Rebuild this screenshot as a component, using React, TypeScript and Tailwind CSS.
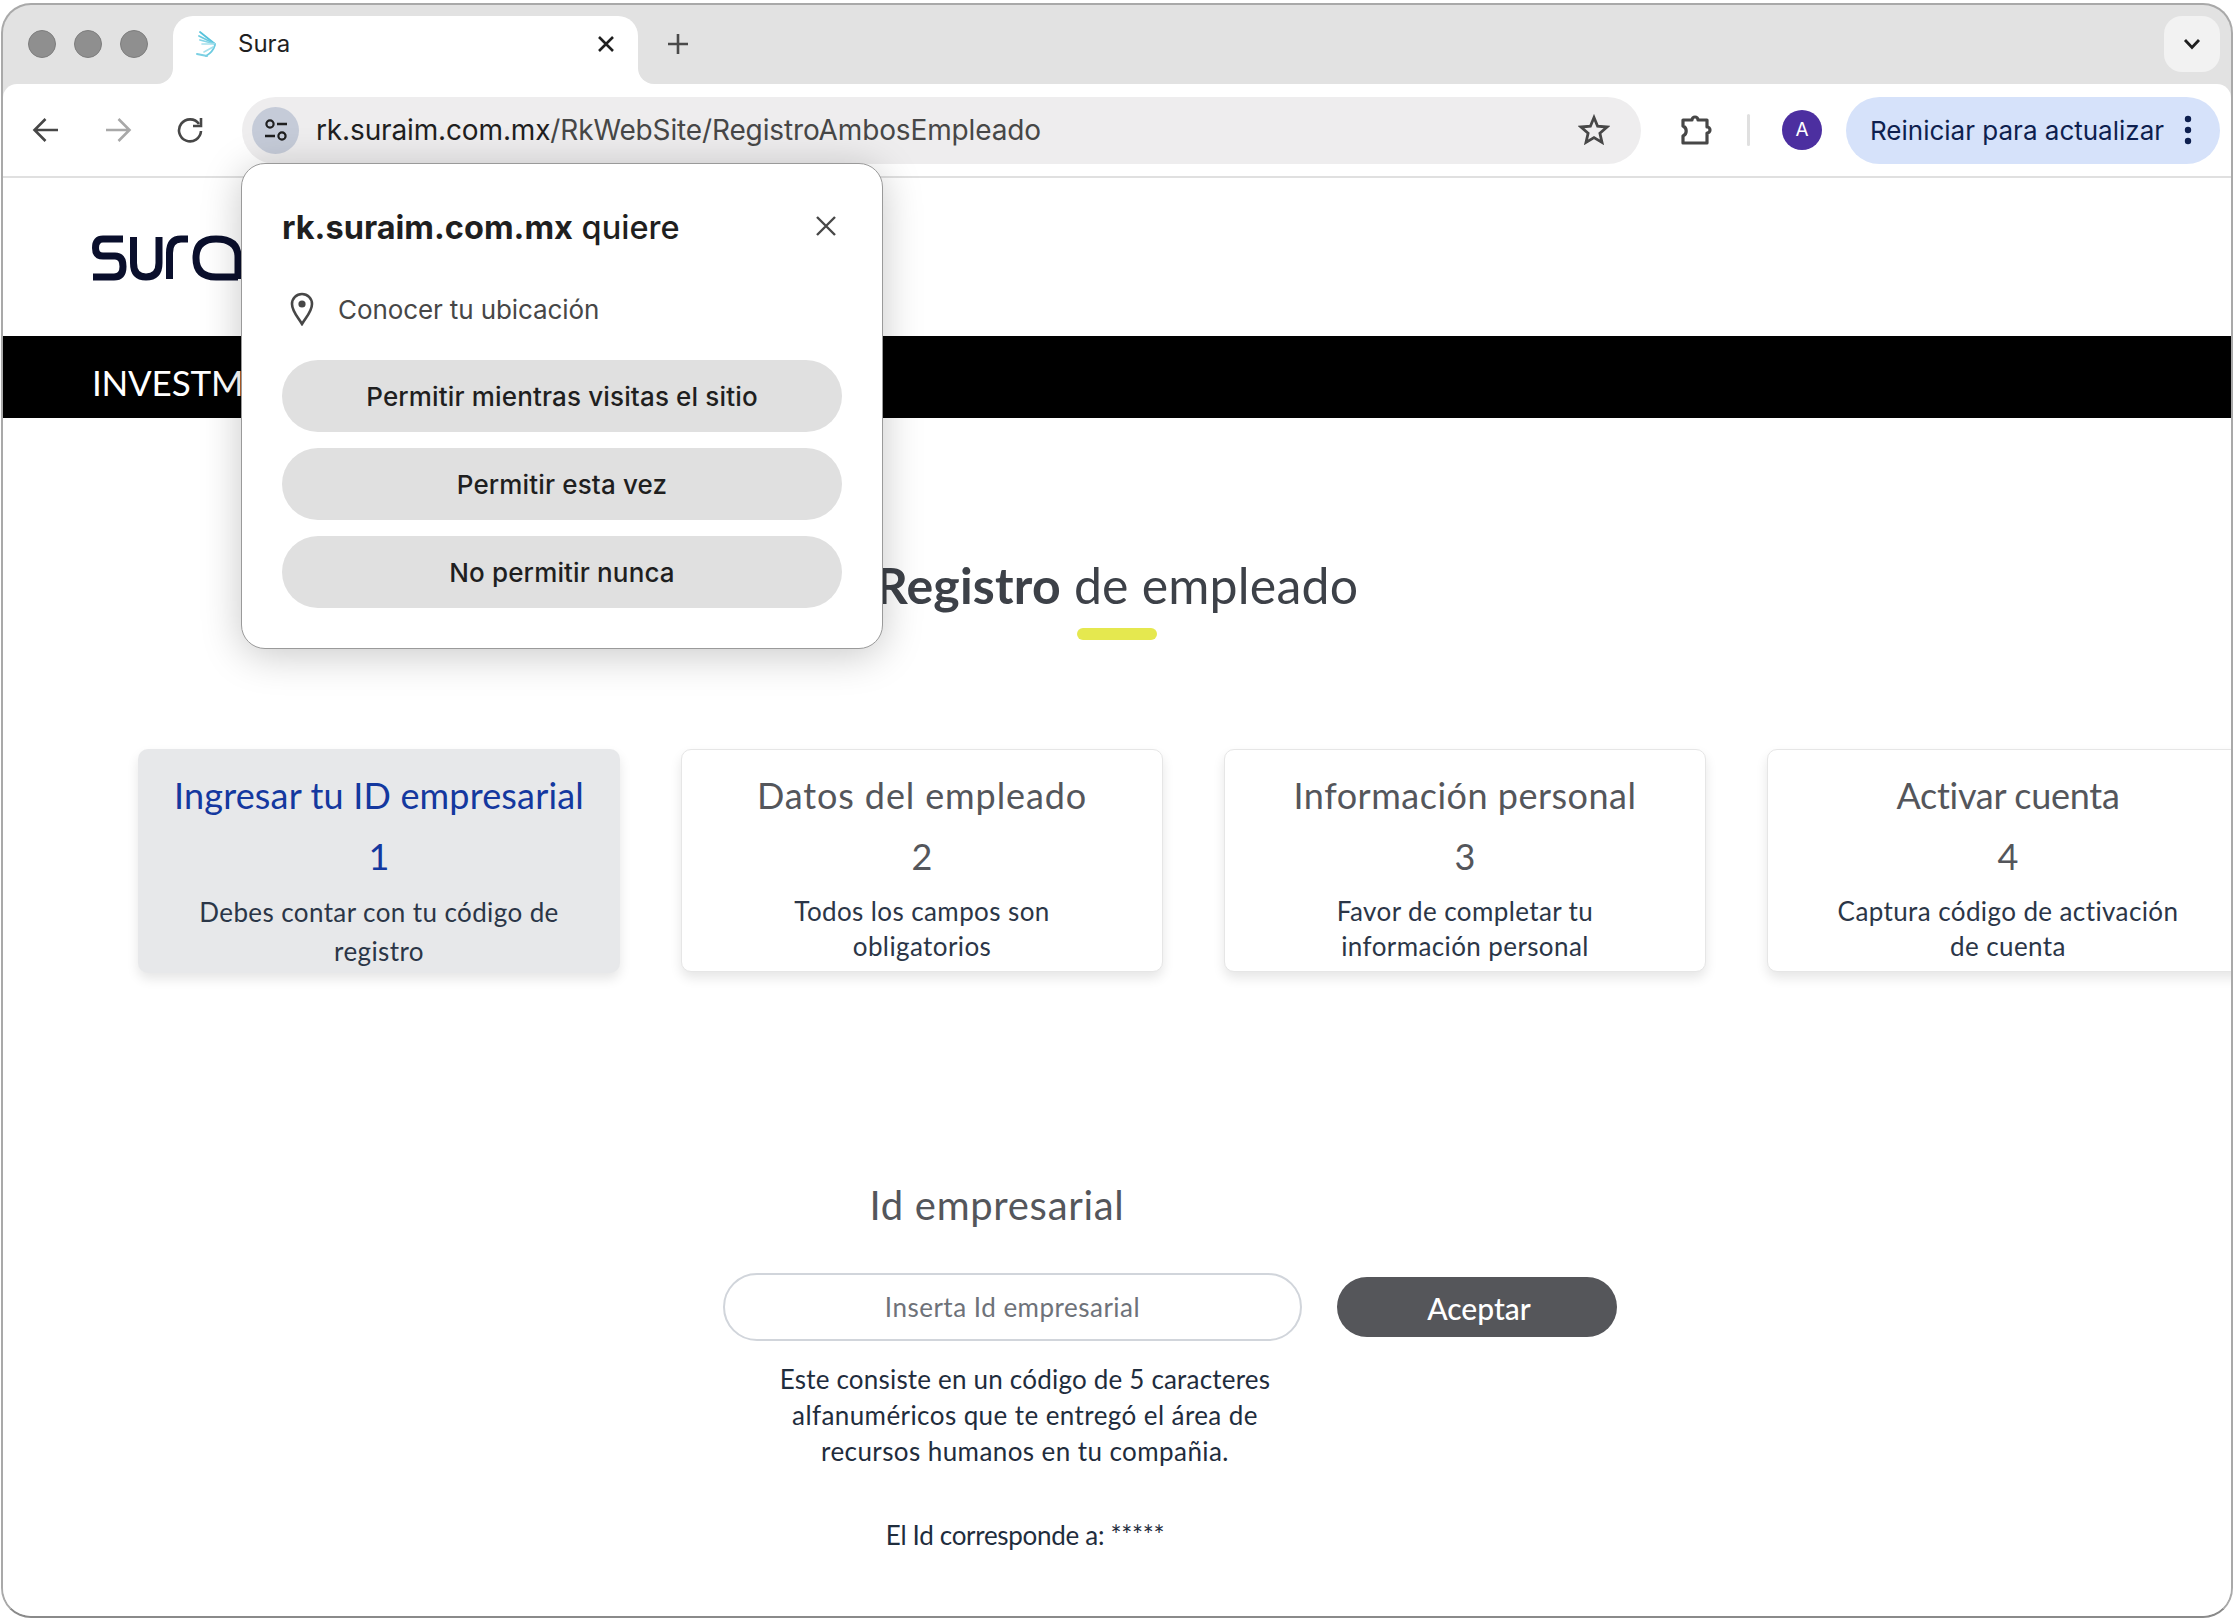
import React from "react";

const ui = "font-['Inter','Liberation_Sans',sans-serif]";
const web = "font-['Lato','Open_Sans',sans-serif]";

function Light() {
  return <span className="block w-[28px] h-[28px] rounded-full bg-[#8f8f8f] border border-[#7d7d7d]" />;
}

function Favicon() {
  return (
    <svg width="22" height="28" viewBox="0 0 22 28" fill="none" strokeLinecap="round">
      <path d="M20 14 L5 2" stroke="#58c3dc" strokeWidth="1.8" />
      <path d="M20 14 L4 6" stroke="#6ccbe0" strokeWidth="1.8" />
      <path d="M20 14 L5 10" stroke="#86d5e6" strokeWidth="1.8" />
      <path d="M20 14 L7 14" stroke="#a5e0ec" strokeWidth="1.6" />
      <path d="M20 15 Q18 22 11 26" stroke="#6ccbe0" strokeWidth="1.8" />
      <path d="M18 17 L9 22" stroke="#a5e0ec" strokeWidth="1.6" />
      <path d="M2 24 L12 26" stroke="#7bd0e3" strokeWidth="2" />
    </svg>
  );
}

function Toolbtn({ children }: { children: React.ReactNode }) {
  return <span className="flex items-center justify-center w-[36px] h-[36px] shrink-0">{children}</span>;
}

function Arrow({ color, flip }: { color: string; flip?: boolean }) {
  return (
    <svg width="28" height="28" viewBox="0 0 28 28" fill="none" className={flip ? "rotate-180" : ""}>
      <path d="M26 14 H3 M13.5 3 L2.5 14 L13.5 25" stroke={color} strokeWidth="2.6" />
    </svg>
  );
}

function Card({ title, num, desc, active, track }: { title: string; num: string; desc: string[]; active?: boolean; track: string }) {
  return (
    <div
      className={
        active
          ? "w-[482px] h-[224px] shrink-0 rounded-[10px] bg-[#e7e8ea] shadow-[0_6px_12px_rgba(0,0,0,0.10)] flex flex-col items-center pt-[24px] text-center"
          : "w-[482px] h-[223px] shrink-0 rounded-[10px] bg-white border border-[#e6e6e6] shadow-[0_6px_12px_rgba(0,0,0,0.10)] flex flex-col items-center pt-[23px] text-center"
      }
    >
      <div className={`text-[36px] leading-[44px] ${track} ${active ? "text-[#14389f]" : "text-[#54565b]"}`}>{title}</div>
      <div className={`mt-[17px] text-[36px] leading-[44px] ${active ? "text-[#14389f]" : "text-[#54565b]"}`}>{num}</div>
      <div className={`text-[26px] tracking-[0.4px] text-[#2b3647] ${active ? "mt-[15px] leading-[39px]" : "mt-[16px] leading-[35px]"}`}>
        {desc.map((d) => (
          <div key={d}>{d}</div>
        ))}
      </div>
    </div>
  );
}

function PermButton({ children }: { children: React.ReactNode }) {
  return (
    <button className="w-[560px] h-[72px] rounded-full bg-[#e0e0e0] text-[26px] font-medium text-[#1f1f1f] tracking-[0.15px] flex items-center justify-center">
      {children}
    </button>
  );
}

export default function App() {
  return (
    <div className={`w-[2236px] h-[1618px] bg-white overflow-hidden pt-[3px] pl-[1px] ${ui}`}>
      <div className="relative w-[2232px] h-[1615px] rounded-[30px] border-2 border-[#a9a9a9] border-b-[#8a8a8a] bg-[#e2e2e2] overflow-hidden flex flex-col">
        {/* tab strip */}
        <div className="flex items-start h-[79px] shrink-0">
          <div className="flex gap-[18px] ml-[25px] mt-[25px]">
            <Light />
            <Light />
            <Light />
          </div>
          <div className="relative ml-[25px] mt-[11px] w-[465px] h-[68px] bg-white rounded-t-[20px] flex items-center pl-[22px] pr-[23px] pb-[12px] z-10">
            <span className="absolute -left-[16px] bottom-0 w-[16px] h-[16px] bg-white">
              <span className="block w-full h-full bg-[#e2e2e2] rounded-br-[16px]" />
            </span>
            <span className="absolute -right-[16px] bottom-0 w-[16px] h-[16px] bg-white">
              <span className="block w-full h-full bg-[#e2e2e2] rounded-bl-[16px]" />
            </span>
            <Favicon />
            <span className="ml-[21px] text-[24px] text-[#1f1f1f]">Sura</span>
            <svg width="18" height="18" viewBox="0 0 18 18" className="ml-auto">
              <path d="M2 2 L16 16 M16 2 L2 16" stroke="#1f1f1f" strokeWidth="2.6" />
            </svg>
          </div>
          <svg width="24" height="24" viewBox="0 0 24 24" className="ml-[28px] mt-[27px]">
            <path d="M12 2 V22 M2 12 H22" stroke="#4a4a4a" strokeWidth="2.6" />
          </svg>
          <div className="ml-auto mr-[11px] mt-[11px] w-[56px] h-[56px] rounded-[18px] bg-[#f2f2f2] flex items-center justify-center">
            <svg width="18" height="12" viewBox="0 0 18 12" fill="none">
              <path d="M2 2 L9 9.5 L16 2" stroke="#1f1f1f" strokeWidth="2.8" />
            </svg>
          </div>
        </div>

        {/* toolbar */}
        <div className="relative flex items-center h-[94px] shrink-0 bg-white rounded-t-[14px] border-b-2 border-[#e0e0e0]">
          <span className="ml-[25px]">
            <Toolbtn>
              <Arrow color="#474747" />
            </Toolbtn>
          </span>
          <span className="ml-[36px]">
            <Toolbtn>
              <Arrow color="#a8a8a8" flip />
            </Toolbtn>
          </span>
          <span className="ml-[36px]">
            <Toolbtn>
              <svg width="28" height="28" viewBox="0 0 28 28" fill="none">
                <path d="M23 8 A11 11 0 1 0 25 15" stroke="#474747" strokeWidth="2.6" />
                <path d="M25 2 V10 H17" stroke="#474747" strokeWidth="2.6" />
              </svg>
            </Toolbtn>
          </span>
          <div className="ml-[34px] w-[1399px] h-[67px] rounded-full bg-[#eeedee] flex items-center">
            <span className="ml-[10px] w-[47px] h-[47px] rounded-full bg-[#c5cbd8] flex items-center justify-center">
              <svg width="26" height="26" viewBox="0 0 26 26" fill="none">
                <circle cx="7" cy="7" r="3.6" stroke="#1f1f1f" strokeWidth="2.2" />
                <path d="M14 7 H24 M2 19 H12" stroke="#1f1f1f" strokeWidth="2.4" />
                <circle cx="19" cy="19" r="3.6" stroke="#1f1f1f" strokeWidth="2.2" />
              </svg>
            </span>
            <span className="ml-[17px] text-[28px] tracking-[-0.14px] text-[#474747]">
              <span className="text-[#1f1f1f]">rk.suraim.com.mx</span>/RkWebSite/RegistroAmbosEmpleado
            </span>
            <svg width="32" height="32" viewBox="0 0 32 32" fill="none" className="ml-auto mr-[31px]">
              <path
                d="M16 3.5 L19.6 12.2 L29 13 L21.9 19.2 L24 28.4 L16 23.6 L8 28.4 L10.1 19.2 L3 13 L12.4 12.2 Z"
                stroke="#474747"
                strokeWidth="2.8"
                strokeLinejoin="miter"
              />
            </svg>
          </div>
          <span className="ml-[36px]">
            <Toolbtn>
              <svg width="36" height="36" viewBox="0 0 36 36" fill="none">
                <path
                  d="M6 8 H15 A3 3 0 0 1 21 8 H30 V15 A3 3 0 0 1 30 21 V31 H6 V24 A5.5 5.5 0 0 0 6 14 Z"
                  stroke="#474747"
                  strokeWidth="3.2"
                  strokeLinejoin="round"
                />
              </svg>
            </Toolbtn>
          </span>
          <span className="ml-[34px] w-[3px] h-[32px] rounded-full bg-[#e0e0e0]" />
          <span className="ml-[32px] w-[40px] h-[40px] rounded-full bg-[#4c2fa0] flex items-center justify-center text-white text-[19px]">A</span>
          <div className="ml-[24px] w-[374px] h-[67px] rounded-full bg-[#d6e2fa] flex items-center pl-[24px] pr-[28px] text-[#0e1f4f]">
            <span className="text-[26px] mt-[1px]">Reiniciar para actualizar</span>
            <svg width="8" height="30" viewBox="0 0 8 30" className="ml-auto">
              <circle cx="4" cy="4" r="3.2" fill="#0e1f4f" />
              <circle cx="4" cy="15" r="3.2" fill="#0e1f4f" />
              <circle cx="4" cy="26" r="3.2" fill="#0e1f4f" />
            </svg>
          </div>
        </div>

        {/* page */}
        <div className={`flex-1 bg-white overflow-hidden ${web}`}>
          <div className="h-[158px] pl-[89px] pt-[57px]">
            <svg width="150" height="46" viewBox="0 0 150 46" fill="none" stroke="#0a0f2c" strokeWidth="7">
              <path d="M31 4 H11 Q3.5 4 3.5 13 Q3.5 21 11 21 H23 Q31 21 31 31.5 Q31 42 22 42 H1" />
              <path d="M41.5 2 V28 Q41.5 42 54 42 Q67 42 67 28 V2" />
              <path d="M77.5 44 V18 Q77.5 4 89 4 H96" />
              <path d="M146 44 V22 Q146 4 124 4 Q104 4 104 23 Q104 42 124 42 H146" />
            </svg>
          </div>
          <div className="h-[82px] bg-black flex items-center pl-[89px] pt-[11px] text-white text-[35px] font-normal tracking-[-0.2px]">INVESTMENT</div>

          <div className="mt-[135px] flex flex-col items-center w-[2228px]">
            <div className="text-[50px] leading-[64px] tracking-[0.2px] text-[#3d4148]">
              <span className="font-bold">Registro</span> de empleado
            </div>
            <div className="mt-[11px] w-[80px] h-[12px] rounded-full bg-[#e5e84f]" />
          </div>

          <div className="mt-[109px] ml-[135px] flex gap-[61px]">
            <Card active track="tracking-[0.16px]" title="Ingresar tu ID empresarial" num="1" desc={["Debes contar con tu código de", "registro"]} />
            <Card track="tracking-[0.87px]" title="Datos del empleado" num="2" desc={["Todos los campos son", "obligatorios"]} />
            <Card track="tracking-[0.5px]" title="Información personal" num="3" desc={["Favor de completar tu", "información personal"]} />
            <Card track="tracking-[-0.3px]" title="Activar cuenta" num="4" desc={["Captura código de activación", "de cuenta"]} />
          </div>

          <div className="mt-[207px] ml-[694px] w-[600px] text-center text-[40px] leading-[50px] tracking-[0.7px] text-[#54565b]">Id empresarial</div>

          <div className="mt-[43px] ml-[720px] flex items-center">
            <div className="w-[579px] h-[68px] rounded-full border-2 border-[#d1d5db] flex items-center justify-center text-[26px] tracking-[0.5px] text-[#6e7279]">
              Inserta Id empresarial
            </div>
            <button className="ml-[35px] w-[280px] h-[60px] rounded-full bg-[#55565a] text-white text-[30px] font-medium pl-[4px] pt-[3px]">Aceptar</button>
          </div>

          <div className="mt-[20px] ml-[722px] w-[600px] text-center text-[26px] leading-[36px] text-[#1f2d3d]">
            <div className="tracking-[0.2px]">Este consiste en un código de 5 caracteres</div>
            <div className="tracking-[0.42px]">alfanuméricos que te entregó el área de</div>
            <div className="tracking-[0.42px]">recursos humanos en tu compañia.</div>
            <div className="mt-[48px] tracking-[-0.3px]">El Id corresponde a: *****</div>
          </div>
        </div>

        {/* permission popup */}
        <div className="absolute left-[238px] top-[158px] w-[642px] h-[486px] rounded-[24px] bg-white border border-[#9a9a9a] shadow-[0_6px_40px_rgba(0,0,0,0.22)] z-20 pl-[40px] pr-[40px]">
          <div className="flex items-center justify-between mt-[41px] h-[46px]">
            <div className="text-[32.5px] text-[#1f1f1f] font-medium">
              <span className="font-bold">rk.suraim.com.mx</span> quiere
            </div>
            <svg width="22" height="22" viewBox="0 0 22 22" className="mr-[5px] -mt-[4px]">
              <path d="M2 2 L20 20 M20 2 L2 20" stroke="#474747" strokeWidth="2.4" />
            </svg>
          </div>
          <div className="flex items-center mt-[40px] h-[36px]">
            <svg width="28" height="34" viewBox="0 0 28 34" fill="none" className="ml-[6px]">
              <path d="M14 32 C9 24 4 19 4 12 A10 10 0 0 1 24 12 C24 19 19 24 14 32 Z" stroke="#474747" strokeWidth="2.6" />
              <circle cx="14" cy="12" r="3.6" fill="#474747" />
            </svg>
            <span className="ml-[22px] text-[26px] tracking-[-0.1px] text-[#474747]">Conocer tu ubicación</span>
          </div>
          <div className="mt-[33px] flex flex-col gap-[16px]">
            <PermButton>Permitir mientras visitas el sitio</PermButton>
            <PermButton>Permitir esta vez</PermButton>
            <PermButton>No permitir nunca</PermButton>
          </div>
        </div>
      </div>
    </div>
  );
}
